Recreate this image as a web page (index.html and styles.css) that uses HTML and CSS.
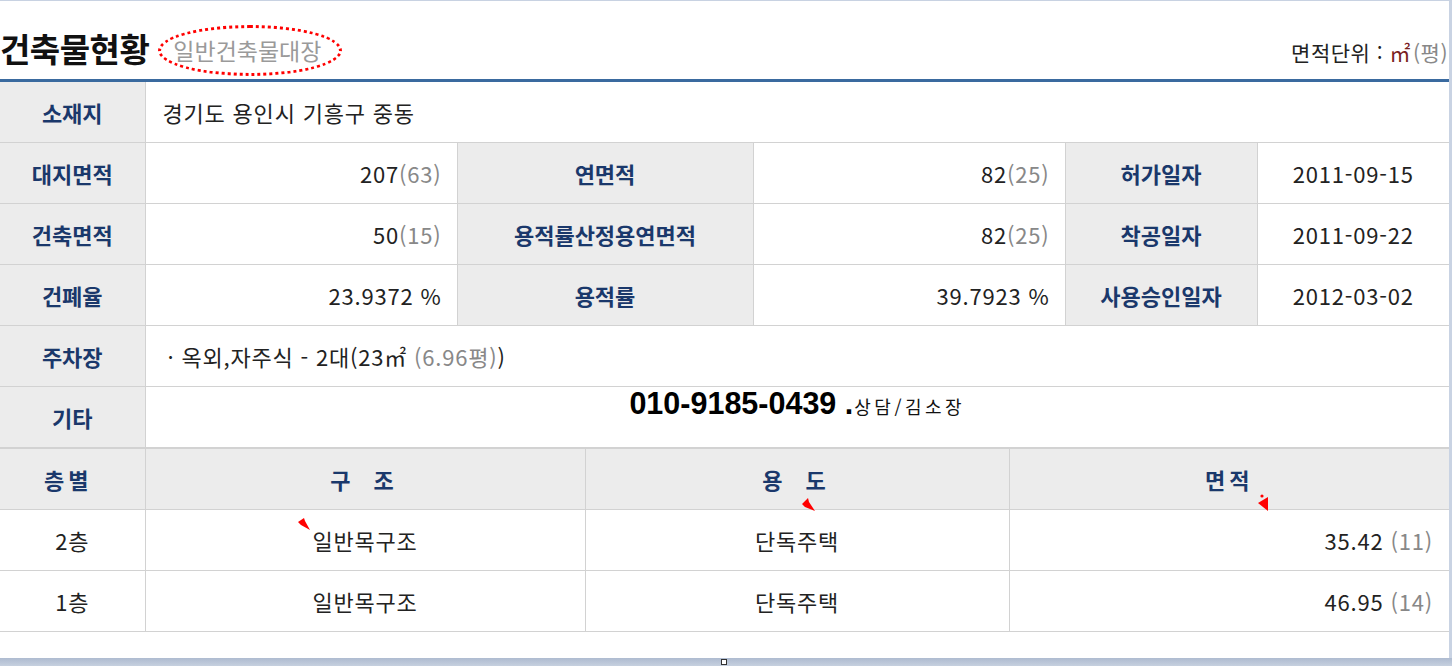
FILE: index.html
```html
<!DOCTYPE html>
<html lang="ko">
<head>
<meta charset="utf-8">
<link rel="stylesheet" href="styles.css">
</head>
<body>
<div class="frame">
  <div class="page">
    <div class="head">
      <h1 class="title">건축물현황</h1>
      <span class="sub">일반건축물대장</span>
      <span class="unit">면적단위 : <span class="sq">㎡</span><span class="py">(평)</span></span>
    </div>
    <table class="info">
      <colgroup>
        <col class="c1"><col class="c2"><col class="c3"><col class="c4"><col class="c5"><col class="c6">
      </colgroup>
      <tr><th>소재지</th><td colspan="5" class="left">경기도 용인시 기흥구 중동</td></tr>
      <tr><th>대지면적</th><td class="num">207<span class="py">(63)</span></td><th>연면적</th><td class="num">82<span class="py">(25)</span></td><th>허가일자</th><td>2011-09-15</td></tr>
      <tr><th>건축면적</th><td class="num">50<span class="py">(15)</span></td><th>용적률산정용연면적</th><td class="num">82<span class="py">(25)</span></td><th>착공일자</th><td>2011-09-22</td></tr>
      <tr><th>건폐율</th><td class="num">23.9372 %</td><th>용적률</th><td class="num">39.7923 %</td><th>사용승인일자</th><td>2012-03-02</td></tr>
      <tr><th>주차장</th><td colspan="5" class="left park">· 옥외,자주식 - 2대(23㎡ <span class="py">(6.96평)</span>)</td></tr>
      <tr><th>기타</th><td colspan="5" class="etc"><span class="phone">010-9185-0439 .</span><span class="contact">상담/김소장</span></td></tr>
    </table>
    <table class="floors">
      <colgroup>
        <col class="f1"><col class="f2"><col class="f3"><col class="f4">
      </colgroup>
      <tr class="fh"><th class="sp1">층별</th><th class="sp2">구 조</th><th class="sp2">용 도</th><th class="sp1">면적</th></tr>
      <tr><td>2층</td><td>일반목구조</td><td>단독주택</td><td class="num">35.42 <span class="py">(11)</span></td></tr>
      <tr><td>1층</td><td>일반목구조</td><td>단독주택</td><td class="num">46.95 <span class="py">(14)</span></td></tr>
    </table>
    <svg class="arrow a1" width="13" height="13" viewBox="0 0 13 13"><polygon points="0,4 6,0 7,3 12,12 3,7" fill="#f00"/></svg>
    <svg class="arrow a2" width="14" height="14" viewBox="0 0 14 14"><polygon points="0,6 6,0 7,4 13,13 3,9" fill="#f00"/></svg>
    <svg class="arrow a3" width="12" height="18" viewBox="0 0 12 18"><circle cx="4" cy="2" r="1.6" fill="#f00"/><polygon points="0,9 10,3 10,17" fill="#f00"/></svg>
  </div>
  <div class="bottombar"><span class="grip"></span></div>
</div>
</body>
</html>
```
FILE: styles.css
```css
html, body {
  margin: 0;
  padding: 0;
  background: #fff;
  font-family: "Noto Sans CJK KR", "Noto Sans", sans-serif;
  color: #222;
}
.frame {
  width: 1452px;
  height: 666px;
  overflow: hidden;
  box-sizing: border-box;
  border-top: 1px solid #c8d2e2;
  display: flex;
  flex-direction: column;
}
.page {
  position: relative;
  width: 1449px;
  height: 657px;
  border-right: 3px solid #c9d3e3;
}
.head {
  height: 78px;
  display: flex;
  align-items: flex-end;
  border-bottom: 3px solid #3a6a9f;
}
.title {
  margin: 0 0 11px 0;
  font-size: 33px;
  font-weight: bold;
  color: #111;
  line-height: 40px;
  letter-spacing: -0.5px;
}
.sub {
  margin: 0 0 3px 9px;
  padding: 0 18px 0 12px;
  height: 45px;
  line-height: 45px;
  font-size: 23px;
  color: #9a9a9a;
  border: 3px dotted #f00;
  border-radius: 50%;
}
.unit {
  margin-left: auto;
  margin-right: 1px;
  margin-bottom: 11px;
  font-size: 21px;
  line-height: 32px;
  letter-spacing: 0.5px;
  color: #222;
}
.unit .sq { color: #7a1f1f; margin-right: 2px; }
.py { color: #888; }

table {
  border-collapse: collapse;
  width: 1449px;
  table-layout: fixed;
}
th, td {
  height: 60px;
  border: 1px solid #d2d2d2;
  padding: 0;
  font-size: 22px;
  font-weight: normal;
  text-align: center;
  vertical-align: middle;
}
td { letter-spacing: 0.8px; }
th {
  background: #ececec;
  color: #1a386b;
  font-weight: bold;
}
tr:first-child th, tr:first-child td { border-top: none; }
th:first-child, td:first-child { border-left: none; }
th:last-child, td:last-child { border-right: none; }

.c1 { width: 145px; }
.c2 { width: 312px; }
.c3 { width: 296px; }
.c4 { width: 312px; }
.c5 { width: 192px; }
.c6 { width: 192px; }

.left { text-align: left; padding-left: 17px; }
.num { text-align: right; padding-right: 15px; }
.park { padding-left: 22px; }
.etc {
  vertical-align: top;
  letter-spacing: 0;
}
.phone {
  font-family: "Liberation Sans", Arial, sans-serif;
  font-weight: bold;
  font-size: 30.5px;
  color: #000;
  line-height: 32px;
}
.contact {
  font-size: 18px;
  letter-spacing: 3.5px;
  color: #111;
  margin-left: 1px;
}

.floors tr:first-child th { border-top: 1px solid #d2d2d2; }
.f1 { width: 145px; }
.f2 { width: 440px; }
.f3 { width: 424px; }
.f4 { width: 440px; }
.sp1 { letter-spacing: 4px; }
.sp2 { letter-spacing: 6px; word-spacing: 5px; }
.floors th.sp1:first-child { padding-right: 8px; }
.floors td.num { padding-right: 16px; }

.arrow { position: absolute; }
.a1 { left: 298px; top: 517px; }
.a2 { left: 802px; top: 497px; }
.a3 { left: 1258px; top: 493px; }

.bottombar {
  position: relative;
  height: 8px;
  background: linear-gradient(#aebbd0, #c6d0df);
}
.grip {
  position: absolute;
  left: 721px;
  top: 1px;
  width: 4px;
  height: 4px;
  border: 1px solid #333;
  background: #fff;
}
```
